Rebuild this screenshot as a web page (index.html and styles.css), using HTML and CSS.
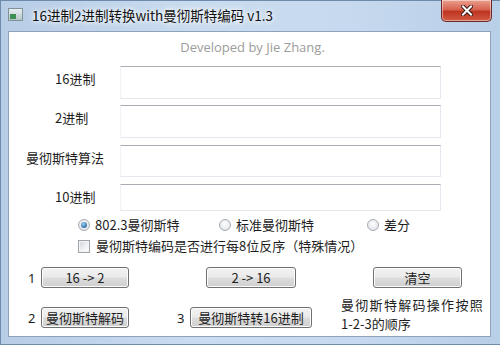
FILE: index.html
```html
<!DOCTYPE html>
<html lang="zh-CN">
<head>
  <meta charset="UTF-8" />
  <title>16进制2进制转换with曼彻斯特编码 v1.3</title>
  <link rel="stylesheet" href="styles.css">
</head>
<body>
  <div class="window">
    <div class="titlebar">
      <span class="app-icon"><span></span></span>
      <span class="title">16进制2进制转换with曼彻斯特编码 v1.3</span>
      <span class="close">
        <svg width="12" height="11" viewBox="0 0 12 11">
          <path d="M2 1.5 L10 9.5 M10 1.5 L2 9.5" stroke="#3a1a1a" stroke-width="4" stroke-linecap="square"/>
          <path d="M2 1.5 L10 9.5 M10 1.5 L2 9.5" stroke="#fff" stroke-width="2" stroke-linecap="square"/>
        </svg>
      </span>
    </div>
    <div class="client">
      <div class="credit">Developed by Jie Zhang.</div>

      <div class="fields">
        <div class="field f1"><span class="lbl">16进制</span><div class="box"></div></div>
        <div class="field f2"><span class="lbl">2进制</span><div class="box"></div></div>
        <div class="field f3"><span class="lbl wide">曼彻斯特算法</span><div class="box"></div></div>
        <div class="field f4"><span class="lbl">10进制</span><div class="box"></div></div>
      </div>

      <div class="options">
        <label class="opt o1"><span class="radio checked"></span>802.3曼彻斯特</label>
        <label class="opt o2"><span class="radio"></span>标准曼彻斯特</label>
        <label class="opt o3"><span class="radio"></span>差分</label>
      </div>

      <label class="check"><span class="checkbox"></span>曼彻斯特编码是否进行每8位反序（特殊情况）</label>

      <div class="actions">
        <div class="row r1">
          <span class="num">1</span>
          <button class="btn b1">16 -&gt; 2</button>
          <button class="btn b2">2 -&gt; 16</button>
          <button class="btn b3">清空</button>
        </div>
        <div class="row r2">
          <span class="num">2</span>
          <button class="btn b1">曼彻斯特解码</button>
          <span class="num n3">3</span>
          <button class="btn b5">曼彻斯特转16进制</button>
          <div class="note">
            <div class="spread">曼彻斯特解码操作按照</div>
            <div>1-2-3的顺序</div>
          </div>
        </div>
      </div>
    </div>
  </div>
</body>
</html>
```

FILE: styles.css
```css
:root {
  --frame: #c3d7ec; --frame-dark: #6f8bab;
  --text: #1e1e1e; --muted: #9c9c9c;
  --cjk: "Noto Sans CJK SC", "Noto Sans", sans-serif;
}
* { box-sizing: border-box; }
body {
  margin: 0;
  font-family: "Noto Sans", "Noto Sans CJK SC", sans-serif;
  color: var(--text);
  background: #fff;
}
.window {
  width: 500px; height: 345px;
  display: flex; flex-direction: column;
  background: linear-gradient(90deg, #b7cde6 0%, #cadcef 40%, #c6d9ee 70%, #b8cfe8 100%);
  border: 1px solid var(--frame-dark);
  border-right: none;
}
.titlebar {
  height: 30px; flex: none;
  display: flex; align-items: flex-start;
  padding-left: 7px;
}
.app-icon {
  width: 15px; height: 13px; margin-top: 7px;
  background: linear-gradient(#e8eef3, #b9c6c8);
  border: 1px solid #7f9297;
  display: flex; align-items: flex-end;
}
.app-icon span {
  width: 6px; height: 5px; margin: 0 0 1px 1px;
  background: #3e8f54;
}
.title {
  margin: 6px 0 0 9px;
  font-family: var(--cjk);
  font-size: 13.5px; line-height: 17px;
  color: #111;
  text-shadow: 0 0 6px #fff, 0 0 4px #fff;
}
.close {
  margin-left: auto; margin-right: 8px; margin-top: -1px;
  width: 51px; height: 22px;
  border: 1px solid #6b2a25; border-top: none;
  border-radius: 0 0 5px 5px;
  background: linear-gradient(#eaa08e 0%, #d8634f 45%, #be3520 55%, #d25a42 100%);
  box-shadow: inset 0 0 0 1px rgba(255,255,255,0.45);
  display: flex; align-items: center; justify-content: center;
}
.client {
  margin: 0 9px 0 7px;
  height: 306px;
  background: #fff;
  border: 1px solid #8ea3bb;
  font-family: var(--cjk);
  font-size: 13px;
}
.credit {
  padding: 7px 0 0 6px;
  text-align: center;
  font-family: "Open Sans", "Noto Sans", sans-serif;
  font-size: 13px; line-height: 16px;
  color: var(--muted);
}
.fields { margin-top: 11px; display: flex; flex-direction: column; }
.field { display: flex; }
.f1 { height: 33px; }
.f2 { height: 33px; margin-top: 6px; }
.f3 { height: 32px; margin-top: 7px; }
.f4 { height: 27px; margin-top: 7px; }
.lbl {
  width: 111px; padding: 5px 0 0 46px;
  line-height: 16px; white-space: nowrap;
}
.lbl.wide { padding-left: 17px; }
.box {
  width: 321px;
  border: 1px solid #e3e9ef;
  border-top-color: #a9acb2;
  border-left-color: #f0f2f5;
}
.options {
  margin-top: 6px; height: 16px;
  display: flex; align-items: center;
  padding-left: 69px;
}
.opt { display: flex; align-items: center; gap: 5px; white-space: nowrap; line-height: 16px; }
.o1 { width: 141px; }
.o2 { width: 148px; }
.radio {
  width: 12px; height: 12px; border-radius: 50%;
  border: 1px solid #a8acb3;
  background: radial-gradient(circle at 50% 40%, #ffffff 0%, #dfe3e8 80%);
  display: flex; align-items: center; justify-content: center;
}
.radio.checked::after {
  content: ""; width: 6px; height: 6px; border-radius: 50%;
  background: radial-gradient(circle at 40% 35%, #9fd0f5 0%, #2f6ea6 70%, #1c4e7e 100%);
}
.check {
  margin-top: 5px; height: 16px;
  display: flex; align-items: center; gap: 6px;
  padding-left: 69px;
  line-height: 16px; white-space: nowrap;
}
.checkbox {
  width: 12px; height: 13px;
  border: 1px solid #9ea3aa;
  background: linear-gradient(135deg, #cfd3d8 0%, #f1f2f4 60%, #ffffff 100%);
  box-shadow: inset 0 0 0 1px #f4f5f6;
}
.actions { margin-top: 13px; }
.row { display: flex; align-items: center; padding-left: 19px; }
.r1 { height: 21px; }
.r2 { height: 21px; margin-top: 19px; }
.num { width: 13px; line-height: 16px; font-family: "Noto Sans", sans-serif; }
.n3 { margin-left: 48px; }
.btn {
  height: 21px; padding: 0;
  font-family: var(--cjk); font-size: 13px; line-height: 15px;
  color: var(--text);
  border: 1px solid #707070; border-radius: 3px;
  background: linear-gradient(#f2f2f2 0%, #ebebeb 48%, #dddddd 52%, #cfcfcf 100%);
  box-shadow: inset 0 0 0 1px #fcfcfc;
}
.b1 { width: 88px; }
.b2 { width: 90px; margin-left: 77px; }
.b3 { width: 89px; margin-left: 77px; }
.b5 { width: 122px; }
.note {
  align-self: flex-start;
  margin: -12px 0 0 29px;
  font-size: 13px;
  line-height: 19px; white-space: nowrap;
}
.note .spread { letter-spacing: 1.3px; }
```
